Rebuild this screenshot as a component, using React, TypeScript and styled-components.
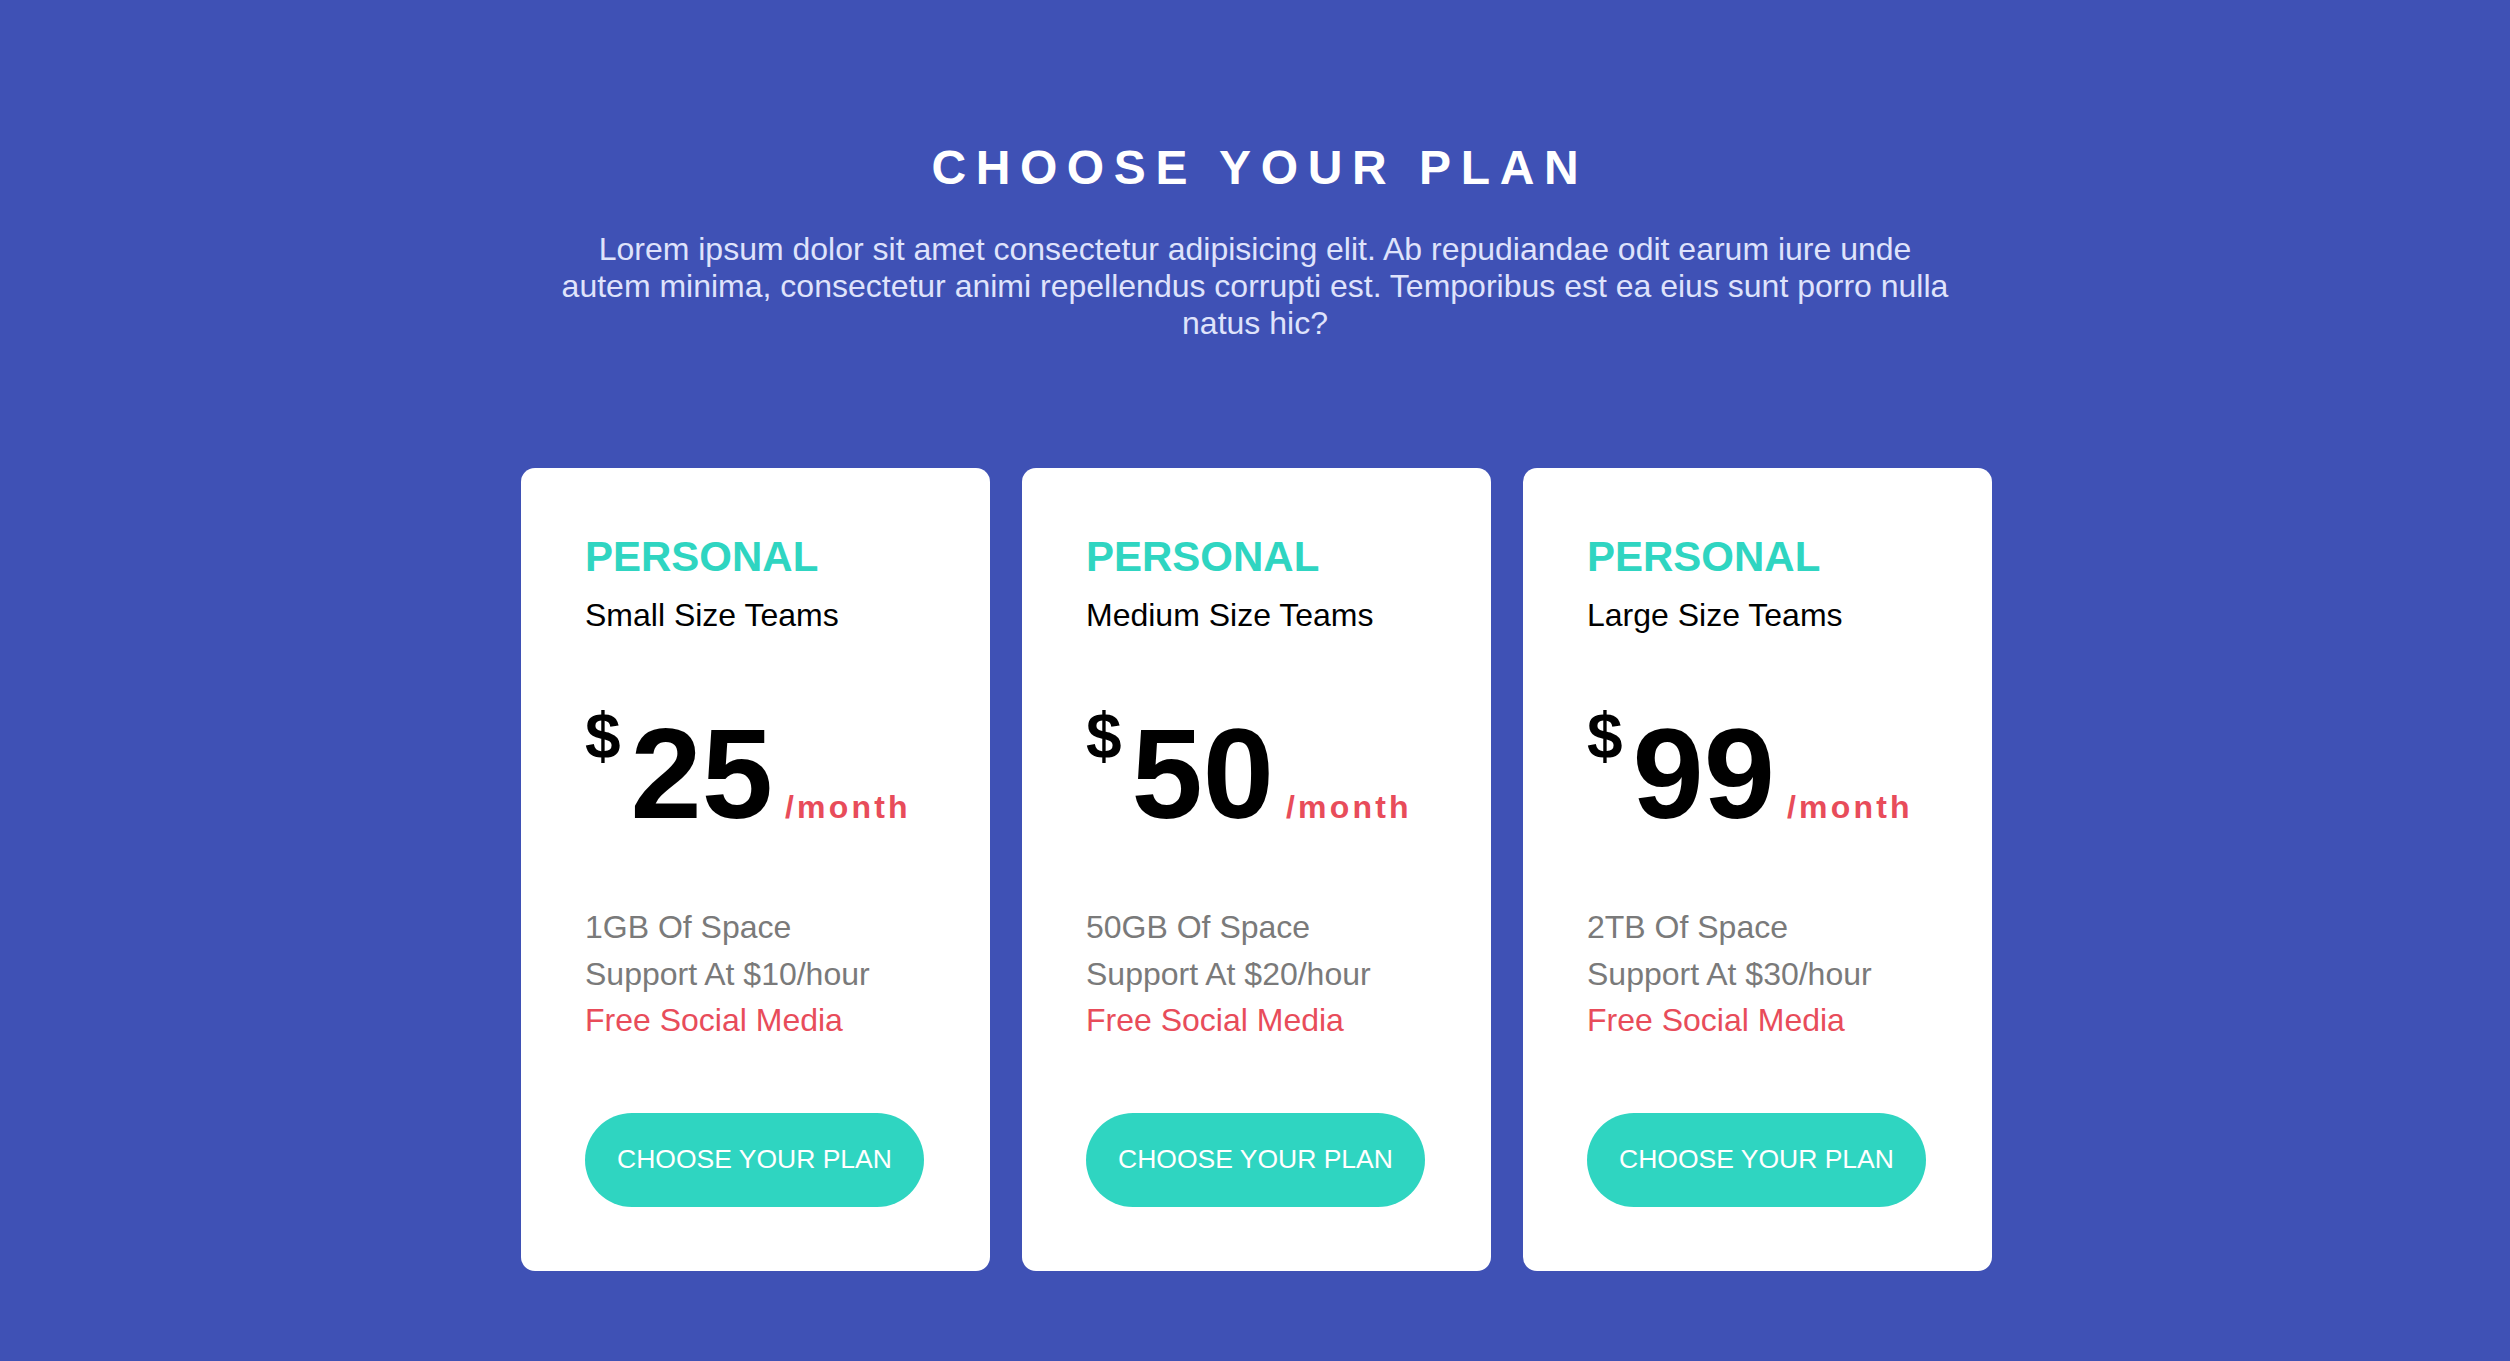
import React from "react";
import styled, { createGlobalStyle } from "styled-components";

const GlobalStyle = createGlobalStyle`
  html, body {
    margin: 0;
    padding: 0;
  }
  body {
    font-family: "Liberation Sans", Arial, Helvetica, sans-serif;
    background: #3f51b5;
  }
  * { box-sizing: border-box; }
`;

const Page = styled.main`
  min-height: 100vh;
  background: #3f51b5;
  padding-top: 140px;
  display: flex;
  flex-direction: column;
  align-items: center;
`;

const Title = styled.h1`
  margin: 0;
  padding-left: 0.2em;
  font-size: 48px;
  line-height: 55px;
  font-weight: 700;
  letter-spacing: 0.2em;
  color: #ffffff;
  text-transform: uppercase;
`;

const Intro = styled.p`
  margin: 36px 0 0;
  font-size: 32px;
  line-height: 37px;
  color: #dfe3fb;
  text-align: center;
`;

const Cards = styled.section`
  margin-top: 126px;
  padding-left: 3px;
  display: flex;
  gap: 32px;
`;

const Card = styled.article`
  width: 469px;
  background: #ffffff;
  border-radius: 14px;
  padding: 66px 64px 64px;
  display: flex;
  flex-direction: column;
`;

const PlanName = styled.h2`
  margin: 0;
  font-size: 42px;
  line-height: 46px;
  font-weight: 700;
  color: #2fd5c1;
`;

const Audience = styled.div`
  margin-top: 17px;
  font-size: 32px;
  line-height: 37px;
  color: #000;
`;

const PriceRow = styled.div`
  margin-top: 76px;
  display: flex;
  align-items: baseline;
  line-height: 1;
  color: #000;
`;

const Currency = styled.span`
  align-self: flex-start;
  margin-top: -6px;
  margin-right: 10px;
  font-size: 64px;
  font-weight: 700;
  line-height: 1;
`;

const Amount = styled.span`
  font-size: 128px;
  font-weight: 700;
  line-height: 1;
`;

const Period = styled.span`
  margin-left: 12px;
  font-size: 32px;
  font-weight: 700;
  letter-spacing: 0.1em;
  color: #e84c5a;
`;

const Features = styled.ul`
  list-style: none;
  margin: 66px 0 0;
  padding: 0;
  font-size: 32px;
  line-height: 46.5px;
`;

const Feature = styled.li<{ $highlight?: boolean }>`
  color: ${(p) => (p.$highlight ? "#e84c5a" : "#7a7a7a")};
`;

const ChooseButton = styled.button`
  margin-top: 69px;
  align-self: flex-start;
  height: 94px;
  padding: 0 32px;
  border: none;
  border-radius: 47px;
  background: #2fd5c1;
  color: #ffffff;
  font-family: "Liberation Sans", Arial, Helvetica, sans-serif;
  font-size: 26.5px;
  font-weight: 400;
  white-space: nowrap;
  cursor: pointer;
`;

const plans = [
  { team: "Small Size Teams", price: "25", space: "1GB Of Space", support: "Support At $10/hour" },
  { team: "Medium Size Teams", price: "50", space: "50GB Of Space", support: "Support At $20/hour" },
  { team: "Large Size Teams", price: "99", space: "2TB Of Space", support: "Support At $30/hour" },
];

export default function App() {
  return (
    <>
      <GlobalStyle />
      <Page>
        <Title>Choose your plan</Title>
        <Intro>
          Lorem ipsum dolor sit amet consectetur adipisicing elit. Ab repudiandae odit earum iure unde
          <br />
          autem minima, consectetur animi repellendus corrupti est. Temporibus est ea eius sunt porro nulla
          <br />
          natus hic?
        </Intro>
        <Cards>
          {plans.map((p) => (
            <Card key={p.price}>
              <PlanName>PERSONAL</PlanName>
              <Audience>{p.team}</Audience>
              <PriceRow>
                <Currency>$</Currency>
                <Amount>{p.price}</Amount>
                <Period>/month</Period>
              </PriceRow>
              <Features>
                <Feature>{p.space}</Feature>
                <Feature>{p.support}</Feature>
                <Feature $highlight>Free Social Media</Feature>
              </Features>
              <ChooseButton>CHOOSE YOUR PLAN</ChooseButton>
            </Card>
          ))}
        </Cards>
      </Page>
    </>
  );
}
